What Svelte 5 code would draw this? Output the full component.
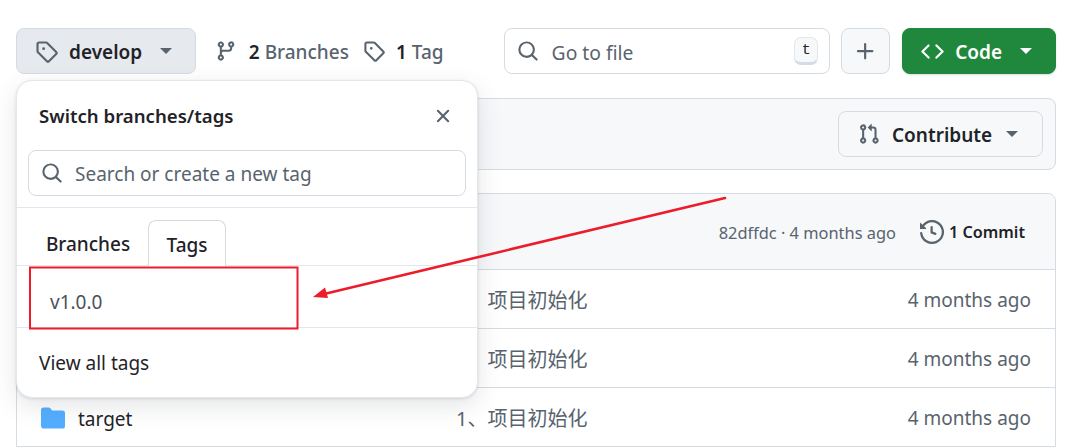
<script>
  const icons = {
    tag: "M1 7.775V2.75C1 1.784 1.784 1 2.75 1h5.025c.464 0 .91.184 1.238.513l6.25 6.25a1.75 1.75 0 0 1 0 2.474l-5.026 5.026a1.75 1.75 0 0 1-2.474 0l-6.25-6.25A1.752 1.752 0 0 1 1 7.775Zm1.5 0c0 .066.026.13.073.177l6.25 6.25a.25.25 0 0 0 .354 0l5.025-5.025a.25.25 0 0 0 0-.354l-6.25-6.25a.25.25 0 0 0-.177-.073H2.75a.25.25 0 0 0-.25.25ZM6 5a1 1 0 1 1 0 2 1 1 0 0 1 0-2Z",
    branch: "M9.5 3.25a2.25 2.25 0 1 1 3 2.122V6A2.5 2.5 0 0 1 10 8.5H6a1 1 0 0 0-1 1v1.128a2.251 2.251 0 1 1-1.5 0V5.372a2.25 2.25 0 1 1 1.5 0v1.836A2.493 2.493 0 0 1 6 7h4a1 1 0 0 0 1-1v-.628A2.25 2.25 0 0 1 9.5 3.25Zm-6 0a.75.75 0 1 0 1.5 0 .75.75 0 0 0-1.5 0Zm8.25-.75a.75.75 0 1 0 0 1.5.75.75 0 0 0 0-1.5ZM4.25 12a.75.75 0 1 0 0 1.5.75.75 0 0 0 0-1.5Z",
    search: "M10.68 11.74a6 6 0 0 1-7.922-8.982 6 6 0 0 1 8.982 7.922l3.04 3.04a.749.749 0 0 1-.326 1.275.749.749 0 0 1-.734-.215ZM11.5 7a4.499 4.499 0 1 0-8.997 0A4.499 4.499 0 0 0 11.5 7Z",
    plus: "M7.75 2a.75.75 0 0 1 .75.75V7h4.25a.75.75 0 0 1 0 1.5H8.5v4.25a.75.75 0 0 1-1.5 0V8.5H2.75a.75.75 0 0 1 0-1.5H7V2.75A.75.75 0 0 1 7.75 2Z",
    code: "m11.28 3.22 4.25 4.25a.75.75 0 0 1 0 1.06l-4.25 4.25a.749.749 0 0 1-1.275-.326.749.749 0 0 1 .215-.734L13.94 8l-3.72-3.72a.749.749 0 0 1 .326-1.275.749.749 0 0 1 .734.215Zm-6.56 0a.751.751 0 0 1 1.042.018.751.751 0 0 1 .018 1.042L2.06 8l3.72 3.72a.749.749 0 0 1-.326 1.275.749.749 0 0 1-.734-.215L.47 8.53a.75.75 0 0 1 0-1.06Z",
    x: "M3.72 3.72a.75.75 0 0 1 1.06 0L8 6.94l3.22-3.22a.749.749 0 0 1 1.275.326.749.749 0 0 1-.215.734L9.06 8l3.22 3.22a.749.749 0 0 1-.326 1.275.749.749 0 0 1-.734-.215L8 9.06l-3.22 3.22a.751.751 0 0 1-1.042-.018.751.751 0 0 1-.018-1.042L6.94 8 3.72 4.78a.75.75 0 0 1 0-1.06Z",
    pr: "M1.5 3.25a2.25 2.25 0 1 1 3 2.122v5.256a2.251 2.251 0 1 1-1.5 0V5.372A2.25 2.25 0 0 1 1.5 3.25Zm5.677-.177L9.573.677A.25.25 0 0 1 10 .854V2.5h1A2.5 2.5 0 0 1 13.5 5v5.628a2.251 2.251 0 1 1-1.5 0V5a1 1 0 0 0-1-1h-1v1.646a.25.25 0 0 1-.427.177L7.177 3.427a.25.25 0 0 1 0-.354ZM3.75 2.5a.75.75 0 1 0 0 1.5.75.75 0 0 0 0-1.5Zm0 9.5a.75.75 0 1 0 0 1.5.75.75 0 0 0 0-1.5Zm8.25.75a.75.75 0 1 0 1.5 0 .75.75 0 0 0-1.5 0Z",
    history: "m.427 1.927 1.215 1.215a8.002 8.002 0 1 1-1.6 5.685.75.75 0 1 1 1.493-.154 6.5 6.5 0 1 0 1.18-4.458l1.358 1.358A.25.25 0 0 1 3.896 6H.25A.25.25 0 0 1 0 5.75V2.104a.25.25 0 0 1 .427-.177ZM7.75 4a.75.75 0 0 1 .75.75v2.992l2.028.812a.75.75 0 0 1-.557 1.392l-2.5-1A.751.751 0 0 1 7 8.25v-3.5A.75.75 0 0 1 7.75 4Z",
    folder: "M1.75 1A1.75 1.75 0 0 0 0 2.75v10.5C0 14.216.784 15 1.75 15h12.5A1.75 1.75 0 0 0 16 13.25v-8.5A1.75 1.75 0 0 0 14.25 3H7.5a.25.25 0 0 1-.2-.1l-.9-1.2C6.07 1.26 5.55 1 5 1H1.75Z"
  };
  const rows = ["", "", "target"];
</script>

{#snippet icon(name, cls = "")}
  <svg class="ic {cls}" viewBox="0 0 16 16" aria-hidden="true"><path d={icons[name]} /></svg>
{/snippet}

<div class="page">
  <div class="toolbar">
    <button class="btn select">{@render icon("tag", "muted")}<span class="label">develop</span><i class="caret muted-caret"></i></button>
    <div class="stat first">{@render icon("branch", "muted")}<b>2</b> <span>Branches</span></div>
    <div class="stat second">{@render icon("tag", "muted")}<b>1</b> <span>Tag</span></div>
    <div class="gofile">{@render icon("search", "muted")}<span class="ph">Go to file</span><kbd>t</kbd></div>
    <button class="btn plus">{@render icon("plus", "muted")}</button>
    <button class="btn code">{@render icon("code")}<span class="label">Code</span><i class="caret"></i></button>
  </div>

  <div class="panel">
    <button class="btn contribute">{@render icon("pr", "muted")}<span class="label">Contribute</span><i class="caret muted-caret"></i></button>
  </div>

  <div class="box">
    <div class="boxhead">
      <span class="hash">82dffdc · 4 months ago</span>
      <span class="commit">{@render icon("history", "muted")}<b>1 Commit</b></span>
    </div>
    {#each rows as name}
      <div class="row">
        <div class="name">{@render icon("folder", "blue")}<span>{name}</span></div>
        <div class="msg">1、项目初始化</div>
        <div class="time">4 months ago</div>
      </div>
    {/each}
  </div>

  <div class="popover">
    <div class="pophead"><strong>Switch branches/tags</strong>{@render icon("x", "muted")}</div>
    <div class="popsearch"><div class="input">{@render icon("search", "muted")}<span class="ph">Search or create a new tag</span></div></div>
    <div class="tabs"><span class="tab">Branches</span><span class="tab active">Tags</span></div>
    <div class="item">v1.0.0</div>
    <div class="viewall">View all tags</div>
  </div>

  <svg class="annot" viewBox="0 0 1080 448" aria-hidden="true">
    <rect x="30" y="267.500" width="267.500" height="61" fill="none" stroke="#ed1c2b" stroke-width="2" />
    <line x1="725" y1="198" x2="322" y2="294.500" stroke="#ed1c2b" stroke-width="2.600" stroke-linecap="round" />
    <path d="M313 297 L325 287.500 L328 298 Z" fill="#ed1c2b" />
  </svg>
</div>

<style>
  :global(body) { margin: 0; background: #fff; }
  .page {
    position: relative; width: 1080px; height: 448px; overflow: hidden; box-sizing: border-box;
    padding: 28px 24px 0 16px;
    font-family: "Noto Sans", "Noto Sans CJK SC", sans-serif; font-size: 19px; color: #1f2328;
  }
  .ic { width: 22px; height: 22px; fill: currentColor; flex: none; display: block; }
  .muted { color: #59636e; }
  .blue { color: #54aeff; width: 24px; height: 24px; }
  .toolbar { display: flex; align-items: center; height: 46px; }
  .btn {
    display: flex; align-items: center; box-sizing: border-box; height: 46px; padding: 0;
    border: 1.500px solid #d5dbe2; border-radius: 8px; background: #f6f8fa;
    font: inherit; font-weight: 600; color: inherit;
  }
  .label { position: relative; top: 1px; }
  .caret { width: 0; height: 0; border: 6px solid transparent; border-top-color: currentColor; border-bottom: 0; display: block; }
  .muted-caret { color: #59636e; }
  .select { width: 180px; padding-left: 18px; background: #e6eaef; }
  .select .ic { width: 23px; height: 23px; }
  .select .label { margin-left: 11px; }
  .select .caret { margin-left: 18px; }
  .stat { display: flex; align-items: center; color: #59636e; font-weight: 500; white-space: pre; padding-top: 1px; }
  .stat .ic { margin-top: -1px; }
  .stat b { font-weight: 600; color: #1f2328; margin-left: 12px; margin-right: 5px; }
  .first { margin-left: 19px; }
  .second { margin-left: 14px; }
  .second b { margin-left: 11px; }
  .gofile {
    display: flex; align-items: center; box-sizing: border-box; width: 327px; height: 46px; margin-left: 60px;
    padding: 0 11px 0 12px; border: 1.500px solid #d5dbe2; border-radius: 8px; background: #fff;
  }
  .ph { color: #59636e; margin-left: 13px; font-weight: 400; position: relative; top: 1px; }
  .gofile .ph { font-size: 19.300px; }
  .input .ph { margin-left: 12px; }
  kbd {
    margin-left: auto; width: 24px; height: 28px; display: flex; align-items: center; justify-content: center;
    box-sizing: border-box; border: 1px solid #e3e7ec; border-bottom: 3px solid #d5dbe2; border-radius: 7px; background: #f6f8fa;
    font-family: "Liberation Mono", monospace; font-size: 15px; color: #1f2328;
  }
  .plus { width: 49px; margin-left: 11px; justify-content: center; }
  .plus .ic { width: 23px; height: 23px; }
  .code { width: 154px; margin-left: 12px; padding-left: 18px; background: #1f883d; border-color: #1f883d; color: #fff; box-shadow: 0 1px 2px rgba(31,35,40,.15); }
  .code .ic { width: 23px; height: 23px; }
  .code .label { margin-left: 11px; }
  .code .caret { margin-left: 18px; }
  .panel {
    display: flex; justify-content: flex-end; align-items: center; box-sizing: border-box; height: 72px; margin-top: 24px;
    padding-right: 12px; background: #f6f8fa; border: 1.500px solid #d5dbe2; border-radius: 8px;
  }
  .contribute { width: 205px; padding-left: 19px; background: #f6f8fa; }
  .contribute .label { margin-left: 12px; }
  .contribute .caret { margin-left: 14px; }
  .box { margin-top: 23px; border: 1.500px solid #d5dbe2; border-radius: 8px 8px 0 0; }
  .boxhead {
    display: flex; align-items: center; justify-content: flex-end; height: 75px; padding-right: 30px;
    background: #f6f8fa; border-radius: 8px 8px 0 0; font-size: 16.400px; color: #59636e;
  }
  .hash { position: relative; top: 1px; }
  .commit { display: flex; align-items: center; margin-left: 24px; color: #1f2328; }
  .commit .ic { width: 24px; height: 24px; }
  .commit b { font-weight: 600; margin-left: 5px; font-size: 16.200px; }
  .row {
    display: flex; align-items: center; box-sizing: border-box; height: 59px; padding: 1px 24px 0;
    border-top: 1.500px solid #d5dbe2; color: #59636e;
  }
  .name { display: flex; align-items: center; gap: 14px; width: 415px; color: #1f2328; }
  .name span { position: relative; top: 1px; margin-left: -1px; }
  .msg { font-size: 20px; }
  .time { margin-left: auto; }
  .popover {
    position: absolute; left: 16px; top: 80px; width: 462px; height: 318px; box-sizing: border-box;
    background: #fff; border: 1px solid #e3e7ec; border-radius: 16px;
    box-shadow: 0 8px 24px rgba(66,74,83,.14), 0 1px 3px rgba(31,35,40,.12);
    display: flex; flex-direction: column;
  }
  .pophead { display: flex; align-items: center; justify-content: space-between; height: 69px; padding: 0 23px 0 22px; }
  .pophead strong { font-weight: 600; font-size: 18.600px; }
  .popsearch { padding: 0 11px; height: 58px; box-sizing: border-box; border-bottom: 1.500px solid #e3e7ec; }
  .input {
    display: flex; align-items: center; box-sizing: border-box; height: 46px; padding-left: 12px;
    border: 1.500px solid #d5dbe2; border-radius: 8px;
  }
  .tabs { display: flex; align-items: flex-end; height: 58px; padding-left: 11px; border-bottom: 1.500px solid #e3e7ec; box-sizing: border-box; }
  .tab { display: flex; align-items: center; justify-content: center; box-sizing: border-box; height: 46px; font-weight: 500; margin-bottom: -1px; padding-top: 2px; }
  .tabs .tab:first-child { width: 120px; }
  .tab.active { width: 78px; background: #fff; border: 1.500px solid #d5dbe2; border-bottom: 0; border-radius: 8px 8px 0 0; }
  .item { display: flex; align-items: center; height: 62px; padding: 10px 0 0 33px; border-bottom: 1.500px solid #e3e7ec; color: #4a525b; box-sizing: border-box; }
  .viewall { display: flex; align-items: center; flex: 1; padding: 1px 0 0 22px; }
  .annot { position: absolute; inset: 0; width: 1080px; height: 448px; pointer-events: none; }
</style>
